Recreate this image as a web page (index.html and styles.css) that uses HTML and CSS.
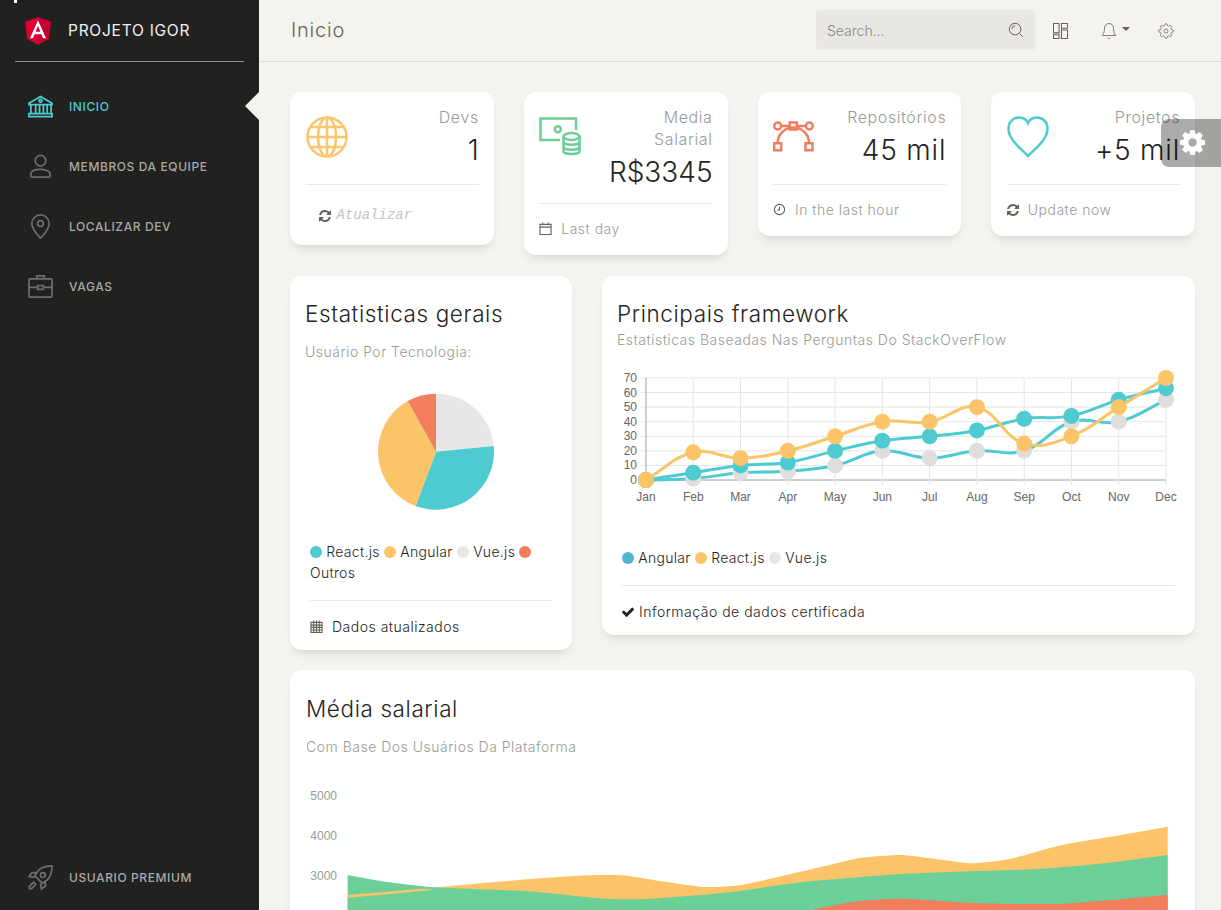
FILE: index.html
```html
<!DOCTYPE html>
<html lang="pt-BR">
<head>
    <meta charset="utf-8">
    <title>Projeto Igor</title>
    <link rel="stylesheet" href="styles.css">
</head>
<body>
    <div class="app">
        <aside class="sidebar">
            <div class="brand">
                <svg class="brand-logo" viewBox="31 30 188 200">
                    <polygon fill="#dd0031" points="125,30 31.900,63.200 46.100,186.300 125,230 203.900,186.300 218.100,63.200"/>
                    <polygon fill="#c3002f" points="125,30 125,230 203.900,186.300 218.100,63.200"/>
                    <path fill="#fff" d="M125,52.100L66.800,182.600h21.700l11.700-29.200h49.400l11.700,29.200h21.700L125,52.100z M142,135.400H108l17-40.900L142,135.400z"/>
                </svg>
                <span>Projeto Igor</span>
            </div>
            <nav class="nav">
                <a class="nav-item active">
                    <svg class="nav-icon" viewBox="0 0 26 24"><path d="M1 8.500 13 1.500l12 7v1.500H1zM3 10v9M8 10v9M12 10v9M16 10v9M20 10v9M24 10v9M1 19.500h24v3H1z"/><circle cx="13" cy="6" r="1.500"/></svg>
                    <span>Inicio</span>
                </a>
                <a class="nav-item">
                    <svg class="nav-icon" viewBox="0 0 26 26"><circle cx="13" cy="7" r="5.500"/><path d="M3 21c0-3 4-5 10-5s10 2 10 5v1.500c0 1-.7 1.500-1.500 1.500h-17c-.8 0-1.500-.5-1.500-1.500z"/></svg>
                    <span>Membros da equipe</span>
                </a>
                <a class="nav-item">
                    <svg class="nav-icon" viewBox="0 0 26 26"><path d="M13 25S4 16.500 4 10a9 9 0 0 1 18 0c0 6.500-9 15-9 15z"/><circle cx="13" cy="10" r="3"/></svg>
                    <span>Localizar dev</span>
                </a>
                <a class="nav-item">
                    <svg class="nav-icon" viewBox="0 0 26 24"><path d="M2 4h22a1 1 0 0 1 1 1v17a1 1 0 0 1-1 1H2a1 1 0 0 1-1-1V5a1 1 0 0 1 1-1zM9 4V1h8v3M1 13h9M16 13h9M10 11h6v4h-6z"/></svg>
                    <span>Vagas</span>
                </a>
                <a class="nav-item premium">
                    <svg class="nav-icon" viewBox="0 0 26 26"><path d="M25 1c-6 0-11 1.500-14.500 5L7 11l8 8 5-3.500C23.500 12 25 7 25 1zM9 8H4L1 12l6 1M18 17v5l-4 3-1-6"/><circle cx="15.500" cy="10.500" r="2.500"/><path d="M6 18l2 2-4 4.500H1.500V22z"/></svg>
                    <span>Usuario premium</span>
                </a>
            </nav>
        </aside>

        <div class="content">
            <header class="topbar">
                <h1 class="page-title">Inicio</h1>
                <div class="search">
                    <span>Search...</span>
                    <svg class="tool-icon" viewBox="0 0 18 18"><circle cx="8" cy="8" r="6.500"/><path d="M4.500 8A3.500 3.500 0 0 1 8 4.500M13 13l3.500 3.500"/></svg>
                </div>
                <div class="tools">
                    <svg class="tool-icon layout" viewBox="0 0 16 17"><path d="M.5.500h6v10h-6zM.5 12.500h6v4h-6zM9 .500h6.500v5H9zM9 7.500h6.500v9H9z"/></svg>
                    <div class="bell">
                        <svg class="tool-icon bell-icon" viewBox="0 0 24 24"><path d="M18 8A6 6 0 0 0 6 8c0 7-3 10-3 10h18s-3-3-3-10M13.730 21a2 2 0 0 1-3.460 0"/></svg>
                        <i class="caret"></i>
                    </div>
                    <svg class="tool-icon" viewBox="0 0 24 24"><path d="M12 15a3 3 0 1 0 0-6 3 3 0 0 0 0 6z"/><path d="M19.400 15a1.650 1.650 0 0 0 .33 1.820l.06.06a2 2 0 0 1 0 2.830 2 2 0 0 1-2.830 0l-.06-.06a1.650 1.650 0 0 0-1.820-.33 1.650 1.650 0 0 0-1 1.510V21a2 2 0 0 1-2 2 2 2 0 0 1-2-2v-.09A1.650 1.650 0 0 0 9 19.400a1.650 1.650 0 0 0-1.820.33l-.06.06a2 2 0 0 1-2.830 0 2 2 0 0 1 0-2.830l.06-.06a1.650 1.650 0 0 0 .33-1.820 1.650 1.650 0 0 0-1.510-1H3a2 2 0 0 1-2-2 2 2 0 0 1 2-2h.09A1.650 1.650 0 0 0 4.600 9a1.650 1.650 0 0 0-.33-1.820l-.06-.06a2 2 0 0 1 0-2.830 2 2 0 0 1 2.830 0l.06.06a1.650 1.650 0 0 0 1.820.33H9a1.650 1.650 0 0 0 1-1.510V3a2 2 0 0 1 2-2 2 2 0 0 1 2 2v.09a1.650 1.650 0 0 0 1 1.510 1.650 1.650 0 0 0 1.820-.33l.06-.06a2 2 0 0 1 2.830 0 2 2 0 0 1 0 2.830l-.06.06a1.650 1.650 0 0 0-.33 1.820V9a1.650 1.650 0 0 0 1.510 1H21a2 2 0 0 1 2 2 2 2 0 0 1-2 2h-.09a1.650 1.650 0 0 0-1.510 1z"/></svg>
                </div>
            </header>

            <main class="dashboard">
                <section class="stats">
                    <article class="card stat">
                        <div class="stat-body">
                            <svg class="stat-icon orange" viewBox="0 0 42 42"><circle cx="21" cy="21" r="19.500"/><ellipse cx="21" cy="21" rx="9" ry="19.500"/><path d="M21 1.500v39M1.500 21h39M4.500 11h33M4.500 31h33"/></svg>
                            <div class="stat-text">
                                <p class="stat-label">Devs</p>
                                <p class="stat-number">1</p>
                            </div>
                        </div>
                        <div class="stat-footer refresh-btn">
                            <svg class="fa" viewBox="128 128 1536 1536"><path d="M1639 1056q0 5-1 7-64 268-268 434.500t-478 166.500q-146 0-282.500-55t-243.500-157l-129 129q-19 19-45 19t-45-19-19-45v-448q0-26 19-45t45-19h448q26 0 45 19t19 45-19 45l-137 137q71 66 161 102t187 36q134 0 250-65t186-179q11-17 53-117 8-23 30-23h192q13 0 22.500 9.500t9.500 22.500zm25-800v448q0 26-19 45t-45 19h-448q-26 0-45-19t-19-45 19-45l138-138q-148-137-349-137-134 0-250 65t-186 179q-11 17-53 117-8 23-30 23h-199q-13 0-22.500-9.500t-9.500-22.500v-7q65-268 270-434.500t480-166.500q146 0 284 55.500t245 156.500l130-129q19-19 45-19t45 19 19 45z"/></svg>
                            <span class="mono">Atualizar</span>
                        </div>
                    </article>

                    <article class="card stat">
                        <div class="stat-body">
                            <svg class="stat-icon green" viewBox="0 0 42 42"><path d="M21 24H1.500V2.500H37V14"/><circle cx="18.800" cy="13.300" r="3"/><ellipse cx="32.500" cy="20.500" rx="8" ry="3.500"/><path d="M24.500 20.500v15c0 1.500 3.500 2.500 8 2.500s8-1 8-2.500v-15M24.500 26c0 1.500 3.500 2.800 8 2.800s8-1.300 8-2.800M24.500 31c0 1.500 3.500 2.800 8 2.800s8-1.300 8-2.800"/></svg>
                            <div class="stat-text">
                                <p class="stat-label">Media Salarial</p>
                                <p class="stat-number">R$3345</p>
                            </div>
                        </div>
                        <div class="stat-footer">
                            <svg class="fa-line" viewBox="0 0 14 14"><path d="M1 2.500h12v11H1zM1 5.500h12M4 .5v3M10 .5v3"/></svg>
                            <span>Last day</span>
                        </div>
                    </article>

                    <article class="card stat">
                        <div class="stat-body">
                            <svg class="stat-icon red" viewBox="0 0 42 42"><path d="M4.700 27C4.700 18 12 11.500 20.300 11.500S36 18 36 27M8.200 10h8.600M23.800 10h9"/><path d="M1.200 27.200h7v7h-7zM32.500 27.200h7v7h-7zM16.800 6.500h7v7h-7z"/><circle cx="4.700" cy="10" r="3.500"/><circle cx="36.300" cy="10" r="3.500"/></svg>
                            <div class="stat-text">
                                <p class="stat-label">Repositórios</p>
                                <p class="stat-number wide">45 mil</p>
                            </div>
                        </div>
                        <div class="stat-footer">
                            <svg class="fa-line" viewBox="0 0 14 14"><circle cx="7" cy="7" r="5.500"/><path d="M7 4v3.500H4.500"/></svg>
                            <span>In the last hour</span>
                        </div>
                    </article>

                    <article class="card stat">
                        <div class="stat-body">
                            <svg class="stat-icon teal" viewBox="0 0 42 42"><path d="M21 40C12 31 1.500 23 1.500 12.500 1.500 6 6 1.500 12 1.500c4 0 7.500 2 9 5.500 1.500-3.500 5-5.500 9-5.500 6 0 10.500 4.500 10.500 11C40.500 23 30 31 21 40z"/></svg>
                            <div class="stat-text">
                                <p class="stat-label">Projetos</p>
                                <p class="stat-number wide">+5 mil</p>
                            </div>
                        </div>
                        <div class="stat-footer">
                            <svg class="fa" viewBox="128 128 1536 1536"><path d="M1639 1056q0 5-1 7-64 268-268 434.500t-478 166.500q-146 0-282.500-55t-243.500-157l-129 129q-19 19-45 19t-45-19-19-45v-448q0-26 19-45t45-19h448q26 0 45 19t19 45-19 45l-137 137q71 66 161 102t187 36q134 0 250-65t186-179q11-17 53-117 8-23 30-23h192q13 0 22.500 9.500t9.500 22.500zm25-800v448q0 26-19 45t-45 19h-448q-26 0-45-19t-19-45 19-45l138-138q-148-137-349-137-134 0-250 65t-186 179q-11 17-53 117-8 23-30 23h-199q-13 0-22.500-9.500t-9.500-22.500v-7q65-268 270-434.500t480-166.500q146 0 284 55.500t245 156.500l130-129q19-19 45-19t45 19 19 45z"/></svg>
                            <span>Update now</span>
                        </div>
                    </article>
                </section>

                <section class="charts">
                    <article class="card chart-card">
                        <h2 class="card-title">Estatisticas gerais</h2>
                        <p class="card-sub spaced">Usuário Por Tecnologia:</p>
                        <svg class="pie" viewBox="306 385 251 132">
                            <path fill="#e8e7e5" d="M436 451.700V393.700A58 58 0 0 1 493.700 446z"/>
                            <path fill="#4ecbd0" d="M436 451.700L493.700 446A58 58 0 0 1 415.600 506z"/>
                            <path fill="#fcc468" d="M436 451.700L415.600 506A58 58 0 0 1 407.700 401.100z"/>
                            <path fill="#f17e5d" d="M436 451.700L407.700 401.100A58 58 0 0 1 436 393.700z"/>
                        </svg>
                        <div class="legend legend-pie">
                            <i class="dot teal-bg"></i> React.js <i class="dot orange-bg"></i> Angular <i class="dot grey-bg"></i> Vue.js <i class="dot red-bg"></i> Outros
                        </div>
                        <div class="chart-footer">
                            <svg class="fa-line" viewBox="0 0 14 14"><path d="M1 2.500h12v11H1zM1 5.500h12M1 8h12M1 10.700h12M4 .5v13M7 .5v13M10 .5v13"/></svg>
                            <span>Dados atualizados</span>
                        </div>
                    </article>

                    <article class="card chart-card">
                        <h2 class="card-title">Principais framework</h2>
                        <p class="card-sub">Estatisticas Baseadas Nas Perguntas Do StackOverFlow</p>
                        <svg id="line-chart" class="line-chart" viewBox="617 366 563 150"></svg>
                        <div class="legend legend-line">
                            <i class="dot blue-bg"></i> Angular <i class="dot orange-bg"></i> React.js <i class="dot grey-bg"></i> Vue.js
                        </div>
                        <div class="chart-footer">
                            <svg class="fa" viewBox="128 128 1536 1536"><path d="M1671 566q0 40-28 68l-724 724-136 136q-28 28-68 28t-68-28l-136-136-362-362q-28-28-28-68t28-68l136-136q28-28 68-28t68 28l294 295 656-657q28-28 68-28t68 28l136 136q28 28 28 68z"/></svg>
                            <span>Informação de dados certificada</span>
                        </div>
                    </article>
                </section>

                <section class="card salary">
                    <h2 class="card-title">Média salarial</h2>
                    <p class="card-sub spaced">Com Base Dos Usuários Da Plataforma</p>
                    <svg id="area-chart" class="area-chart" viewBox="306 780 874 200"></svg>
                </section>
            </main>
        </div>
    </div>

    <!-- floating config tab -->
    <div class="config-tab">
        <svg viewBox="128 128 1536 1536"><path d="M1152 896q0-106-75-181t-181-75-181 75-75 181 75 181 181 75 181-75 75-181zm512-109v222q0 12-8 23t-20 13l-185 28q-19 54-39 91 35 50 107 138 10 12 10 25t-9 23q-27 37-99 108t-94 71q-12 0-26-9l-138-108q-44 23-91 38-16 136-29 186-7 28-36 28h-222q-14 0-24.500-8.500t-11.500-21.500l-28-184q-49-16-90-37l-141 107q-10 9-25 9-14 0-25-11-126-114-165-168-7-10-7-23 0-12 8-23 15-21 51-66.500t54-70.500q-27-50-41-99l-183-27q-13-2-21-12.500t-8-23.500v-222q0-12 8-23t19-13l186-28q14-46 39-92-40-57-107-138-10-12-10-24 0-10 9-23 26-36 98.500-107.500t94.500-71.500q13 0 26 10l138 107q44-23 91-38 16-136 29-186 7-28 36-28h222q14 0 24.500 8.500t11.500 21.500l28 184q49 16 90 37l142-107q9-9 24-9 13 0 25 10 129 119 165 170 7 8 7 22 0 12-8 23-15 21-51 66.500t-54 70.500q26 50 41 98l183 28q13 2 21 12.500t8 23.500z"/></svg>
    </div>

    <!-- tip of the mouse pointer caught in the shot -->
    <i class="pointer"></i>

    <script src="charts.js"></script>
</body>
</html>
```

FILE: styles.css
```css
* {
    box-sizing: border-box;
}

html, body {
    margin: 0;
    height: 100%;
    overflow: hidden;
}

body {
    font-family: Inter, "Noto Sans", sans-serif;
    font-size: 14px;
    line-height: 21px;
    letter-spacing: .5px;
    color: #252422;
    background: #f4f3ef;
}

p, h1, h2 {
    margin: 0;
    font-weight: 400;
}

svg {
    display: block;
}

.app {
    display: flex;
    height: 100vh;
}

/* sidebar */
.sidebar {
    flex: 0 0 259px;
    display: flex;
    flex-direction: column;
    background: #212120;
}

.brand {
    display: flex;
    align-items: center;
    gap: 17px;
    height: 62px;
    margin: 0 15px;
    padding-left: 10px;
    border-bottom: 1px solid #8a8a89;
    color: #f2f2f2;
    font-size: 15.500px;
    letter-spacing: .75px;
    text-transform: uppercase;
}

.brand-logo {
    width: 26px;
    height: 28px;
}

.nav {
    flex: 1;
    display: flex;
    flex-direction: column;
    padding: 14px 0 3px;
}

.nav-item {
    position: relative;
    display: flex;
    align-items: center;
    gap: 16px;
    height: 60px;
    padding-left: 28px;
    color: #a9a9a8;
    font-size: 12px;
    font-weight: 500;
    letter-spacing: .6px;
    text-transform: uppercase;
}

.nav-icon {
    width: 25px;
    height: 25px;
    fill: none;
    stroke: #6d6d6c;
    stroke-width: 1.800;
}

.nav-item.active {
    color: #4ecbd0;
}

.nav-item.active .nav-icon {
    stroke: #4ecbd0;
}

.nav-item.active::after {
    content: "";
    position: absolute;
    right: 0;
    top: 16px;
    border: 14px solid transparent;
    border-left-width: 0;
    border-right-color: #f4f3ef;
}

.premium {
    margin-top: auto;
}

/* top bar */
.content {
    flex: 1;
    min-width: 0;
}

.topbar {
    display: flex;
    align-items: center;
    height: 62px;
    padding-left: 32px;
    border-bottom: 1px solid #ddd;
}

.page-title {
    flex: 1;
    font-size: 20px;
    letter-spacing: .8px;
    font-weight: 300;
    color: #66615b;
}

.search {
    display: flex;
    align-items: center;
    justify-content: space-between;
    width: 219px;
    height: 40px;
    margin-top: -1px;
    padding: 0 11px;
    border-radius: 4px;
    background: #e8e7e3;
    color: #888;
    letter-spacing: 0;
    font-weight: 300;
}

.tool-icon {
    width: 16px;
    height: 16px;
    fill: none;
    stroke: #66615b;
    stroke-width: 1.100;
}

.tool-icon.layout {
    width: 15px;
}

.tool-icon.bell-icon {
    width: 18px;
    height: 18px;
}

.tools {
    display: flex;
    align-items: center;
    gap: 32px;
    padding: 0 47px 0 18px;
}

.bell {
    display: flex;
    align-items: center;
    gap: 4px;
    margin-right: -4px;
}

.caret {
    margin-top: -4px;
    border: 4px solid transparent;
    border-top-color: #66615b;
    border-bottom-width: 0;
}

/* dashboard */
.dashboard {
    padding: 30px 26px 0 31px;
}

.card {
    border-radius: 12px;
    background: #fff;
    box-shadow: 0 6px 10px -4px rgba(0, 0, 0, .15);
}

.stats {
    display: grid;
    grid-template-columns: repeat(4, 1fr);
    gap: 30px;
    align-items: start;
    margin-bottom: 21px;
}

.stat-body {
    display: flex;
    justify-content: space-between;
    min-height: 92px;
    padding: 14px 15px 14px 15.500px;
}

.stat-icon {
    flex: none;
    width: 42px;
    height: 42px;
    margin-top: 10px;
    fill: none;
    stroke-width: 2.500;
}

.orange { stroke: #fbc66c; }
.green { stroke: #6bd098; }
.red { stroke: #f17e5d; }
.teal { stroke: #4ecbd0; }

.stat-text {
    width: 106px;
    text-align: right;
}

.stat-label {
    color: #9a9a9a;
    font-size: 16px;
    line-height: 22px;
    letter-spacing: .6px;
    font-weight: 300;
}

.stat-number {
    margin-top: 6px;
    font-size: 28px;
    line-height: 33px;
    letter-spacing: 0;
    font-weight: 300;
    white-space: nowrap;
}

.stat-number.wide {
    letter-spacing: .8px;
}

.stat-footer {
    display: flex;
    align-items: center;
    gap: 9px;
    margin: 0 15px 0 15.500px;
    padding: 14px 0 16px;
    border-top: 1px solid #e8e8e8;
    color: #9a9a9a;
    font-weight: 300;
}

.refresh-btn {
    gap: 6px;
    padding: 20px 0 19px 13px;
}

.mono {
    font-family: "Liberation Mono", monospace;
    font-size: 14px;
    font-style: italic;
    letter-spacing: 0;
    color: #c4c4c4;
}

.fa {
    flex: none;
    width: 12px;
    height: 12px;
    fill: #66615b;
}

.fa-line {
    flex: none;
    width: 13px;
    height: 13px;
    fill: none;
    stroke: #66615b;
    stroke-width: 1.200;
}

/* chart cards */
.charts {
    display: grid;
    grid-template-columns: 282px 593px;
    gap: 30px;
    align-items: start;
    margin-bottom: 20px;
}

.chart-card {
    padding: 22px 15px 13px;
}

.card-title {
    font-size: 22.500px;
    line-height: 32px;
    letter-spacing: .6px;
    font-weight: 300;
}

.card-sub {
    line-height: 20px;
    color: #9a9a9a;
    font-weight: 300;
}

.card-sub.spaced {
    margin-top: 12px;
}

.pie {
    width: 251px;
    height: 132px;
    margin: 23px 0 0 1px;
}

.line-chart {
    width: 563px;
    height: 150px;
    margin-top: 16px;
}

.legend {
    padding-left: 5px;
    letter-spacing: .3px;
    font-weight: 300;
}

.legend-pie {
    margin-top: 24px;
}

.legend-line {
    margin-top: 31px;
}

.dot {
    display: inline-block;
    width: 12px;
    height: 12px;
    border-radius: 50%;
    vertical-align: -1px;
}

.teal-bg { background: #4ecbd0; }
.blue-bg { background: #51b5d0; }
.orange-bg { background: #fcc468; }
.grey-bg { background: #e8e7e5; }
.red-bg { background: #f17e5d; }

.chart-footer {
    display: flex;
    align-items: center;
    gap: 9px;
    margin: 17px 5px 0;
    padding-top: 15px;
    border-top: 1px solid #e8e8e8;
    font-weight: 300;
}

.chart-footer .fa {
    margin-right: -4px;
    fill: #252422;
}

.salary {
    padding: 23px 15px 0 16px;
}

.area-chart {
    width: 874px;
    height: 200px;
    margin-top: 23px;
}

.chart-label {
    font-family: "Liberation Sans", sans-serif;
    font-size: 12px;
    letter-spacing: 0;
    fill: #666;
}

.chart-label.muted {
    fill: #9a9a9a;
}

/* floating config tab */
.config-tab {
    position: absolute;
    top: 119px;
    right: 0;
    display: flex;
    align-items: center;
    width: 60px;
    height: 48px;
    padding-left: 19px;
    border-radius: 8px 0 0 8px;
    background: rgba(0, 0, 0, .33);
}

.config-tab svg {
    width: 25px;
    height: 25px;
    fill: #fff;
    margin-top: -2px;
}

.pointer {
    position: absolute;
    top: 0;
    left: 14px;
    width: 3px;
    height: 3px;
    background: #fff;
}
```

FILE: charts.js
```js
var SVG_NS = "http://www.w3.org/2000/svg";

function add(parent, name, attrs, text) {
    var el = document.createElementNS(SVG_NS, name);
    for (var key in attrs) {
        el.setAttribute(key, attrs[key]);
    }
    if (text !== undefined) {
        el.textContent = text;
    }
    parent.appendChild(el);
    return el;
}

// same curve as chart.js bezier tension
function smooth(points, tension) {
    var controls = points.map(function (p, i) {
        var prev = points[Math.max(i - 1, 0)];
        var next = points[Math.min(i + 1, points.length - 1)];
        var d1 = Math.hypot(p[0] - prev[0], p[1] - prev[1]);
        var d2 = Math.hypot(next[0] - p[0], next[1] - p[1]);
        var total = d1 + d2 || 1;
        var dx = next[0] - prev[0];
        var dy = next[1] - prev[1];
        return {
            before: [p[0] - tension * d1 / total * dx, p[1] - tension * d1 / total * dy],
            after: [p[0] + tension * d2 / total * dx, p[1] + tension * d2 / total * dy]
        };
    });
    var d = "M" + points[0].join(" ");
    for (var i = 1; i < points.length; i++) {
        d += "C" + controls[i - 1].after.join(" ") + " " + controls[i].before.join(" ") + " " + points[i].join(" ");
    }
    return d;
}

function drawLineChart() {
    var svg = document.getElementById("line-chart");
    var months = ["Jan", "Feb", "Mar", "Apr", "May", "Jun", "Jul", "Aug", "Sep", "Oct", "Nov", "Dec"];
    var left = 646, right = 1166, bottom = 480, top = 378;
    var stepX = (right - left) / 11;
    var stepY = (bottom - top) / 70;

    for (var v = 0; v <= 70; v += 10) {
        var y = bottom - v * stepY;
        add(svg, "line", { x1: left - 5, x2: right, y1: y, y2: y, stroke: v ? "#e6e6e6" : "#a0a0a0" });
        add(svg, "text", { x: 637, y: y + 4, "text-anchor": "end", "class": "chart-label" }, v);
    }
    months.forEach(function (name, i) {
        var x = left + i * stepX;
        add(svg, "line", { x1: x, x2: x, y1: top, y2: bottom + 5, stroke: i ? "#e6e6e6" : "#a0a0a0" });
        add(svg, "text", { x: x, y: 501, "text-anchor": "middle", "class": "chart-label" }, name);
    });

    var series = [
        { line: "#4ecbd0", point: "#e0dedc", data: [0, 1, 5, 6, 10, 20, 15, 20, 20, 40, 40, 55] },
        { line: "#4ecbd0", point: "#4ecbd0", data: [0, 5, 10, 12, 20, 27, 30, 34, 42, 44, 55, 63] },
        { line: "#fcc468", point: "#fcc468", data: [0, 19, 15, 20, 30, 40, 40, 50, 25, 30, 50, 70] }
    ];
    series.forEach(function (s) {
        var points = s.data.map(function (v, i) {
            return [left + i * stepX, bottom - v * stepY];
        });
        add(svg, "path", { d: smooth(points, 0.4), fill: "none", stroke: s.line, "stroke-width": 3 });
        points.forEach(function (p) {
            add(svg, "circle", { cx: p[0], cy: p[1], r: 8, fill: s.point });
        });
    });
}

function drawAreaChart() {
    var svg = document.getElementById("area-chart");
    var floor = 980;

    [[5000, 796], [4000, 836], [3000, 876]].forEach(function (t) {
        add(svg, "text", { x: 337, y: t[1] + 4, "text-anchor": "end", "class": "chart-label muted" }, t[0]);
    });

    var areas = [
        { fill: "#fcc468", points: [[347.6, 895], [420.6, 888.7], [527.5, 879.3], [587, 875.3], [622.5, 875.3], [658, 880.7], [705.7, 887], [741, 885], [812.6, 869], [860, 858], [901.6, 855], [943, 860], [973, 863.3], [1008.5, 859.3], [1062, 845], [1121, 835], [1167.7, 826.7]] },
        { fill: "#6bd098", points: [[347.6, 875], [385, 881.7], [435.5, 887.3], [527.5, 891.3], [604.7, 898.7], [646, 899], [729.4, 892.3], [800.7, 882.3], [901.6, 874], [1038, 869], [1109.5, 862.7], [1167.7, 855]] },
        { fill: "#f17e5d", points: [[780, 925], [812.6, 910], [860, 901], [901.6, 898.7], [979, 903.3], [1062, 903.7], [1167.7, 895]] }
    ];
    areas.forEach(function (a) {
        var first = a.points[0], last = a.points[a.points.length - 1];
        var d = smooth(a.points, 0.2) + "L" + last[0] + " " + floor + "L" + first[0] + " " + floor + "Z";
        add(svg, "path", { d: d, fill: a.fill });
    });
    // thin bit of the orange layer that shows over the green one
    add(svg, "path", { d: "M347.6 895L420.6 888.7L435.500 889.500L420.6 891.200L347.6 897.700Z", fill: "#fcc468" });
}

drawLineChart();
drawAreaChart();
```
